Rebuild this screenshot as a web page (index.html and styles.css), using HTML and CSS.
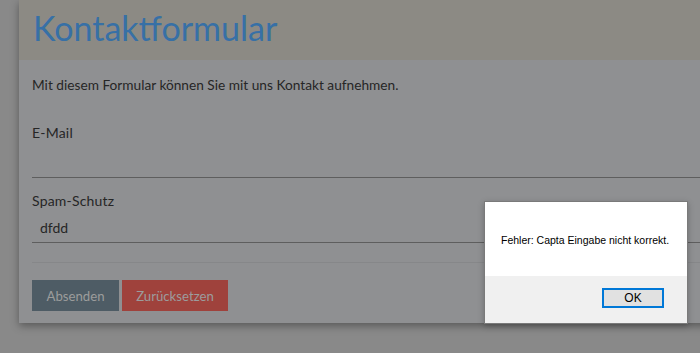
FILE: index.html
```html
<!DOCTYPE html>
<html lang="de">
<head>
<meta charset="utf-8">
<title>Kontaktformular</title>
<link rel="stylesheet" href="styles.css">
</head>
<body>
<div class="page">
  <div class="card">
    <header class="card-head">
      <h1 class="title">Kontaktformular</h1>
    </header>
    <form class="card-body">
      <p class="intro">Mit diesem Formular können Sie mit uns Kontakt aufnehmen.</p>
      <div class="field field-email">
        <label class="label">E-Mail</label>
        <div class="input"></div>
      </div>
      <div class="field field-spam">
        <label class="label">Spam-Schutz</label>
        <div class="input">dfdd</div>
      </div>
      <div class="divider"></div>
      <div class="actions">
        <button type="button" class="btn btn-send">Absenden</button>
        <button type="button" class="btn btn-reset">Zurücksetzen</button>
      </div>
    </form>
  </div>
</div>
<div class="dialog">
  <div class="dialog-msg">Fehler: Capta Eingabe nicht korrekt.</div>
  <div class="dialog-foot">
    <button type="button" class="dialog-ok">OK</button>
  </div>
</div>
</body>
</html>
```
FILE: styles.css
```css
html, body {
  margin: 0;
  padding: 0;
}
body {
  width: 700px;
  height: 353px;
  overflow: hidden;
  background: #898989;
  font-family: Lato, "Open Sans", sans-serif;
  position: relative;
}
.page {
  padding-left: 19px;
}
.card {
  width: 700px;
  background: #8f9092;
  box-shadow: 0 3px 8px rgba(0, 0, 0, 0.35);
}
.card-head {
  height: 60px;
  background: #8c8a84;
  display: flex;
  align-items: center;
}
.title {
  margin: 0 0 0 14px;
  font-weight: 400;
  font-size: 34px;
  color: #3770a6;
  position: relative;
  top: -3px;
}
.card-body {
  padding: 15px 0 12px 13px;
  display: flex;
  flex-direction: column;
}
.intro {
  margin: 0;
  font-size: 13.7px;
  line-height: 20px;
  color: #262626;
}
.field {
  display: flex;
  flex-direction: column;
}
.field-email {
  margin-top: 28px;
}
.field-spam {
  margin-top: 13px;
}
.label {
  font-size: 14px;
  line-height: 20px;
  color: #262626;
  letter-spacing: 0.2px;
}
.input {
  border-bottom: 1px solid #5e5e5e;
  font-size: 14px;
  line-height: 20px;
  color: #262626;
  padding-left: 8px;
}
.field-email .input {
  height: 34px;
}
.field-spam .input {
  height: 24px;
  padding-top: 7px;
}
.divider {
  margin-top: 19px;
  border-top: 1px solid #868789;
}
.actions {
  margin-top: 17px;
  display: flex;
  gap: 3px;
}
.btn {
  height: 31px;
  border: 0;
  font-family: Lato, "Open Sans", sans-serif;
  font-size: 13.2px;
  color: #9c9c9c;
  padding: 0;
  margin: 0;
}
.btn-send {
  background: #4e5c65;
  width: 87px;
}
.btn-reset {
  background: #9f423c;
  width: 106px;
}
.dialog {
  position: absolute;
  left: 484px;
  top: 201px;
  width: 202px;
  height: 121px;
  background: #ffffff;
  border: 1px solid #7a7a7a;
  box-shadow: 0 2px 6px rgba(0, 0, 0, 0.25);
  display: flex;
  flex-direction: column;
  font-family: "Liberation Sans", Arial, sans-serif;
}
.dialog-msg {
  height: 74px;
  display: flex;
  align-items: center;
  padding-left: 16px;
  padding-top: 2px;
  box-sizing: border-box;
  font-size: 10.5px;
  color: #000;
}
.dialog-foot {
  flex: 1;
  background: #f0f0f0;
  display: flex;
  justify-content: flex-end;
  align-items: flex-start;
  padding: 12px 23px 0 0;
}
.dialog-ok {
  width: 62px;
  height: 20px;
  background: #e1e1e1;
  border: 2px solid #0078d7;
  font-family: "Liberation Sans", Arial, sans-serif;
  font-size: 12px;
  color: #000;
  padding: 0;
  line-height: 14px;
}
```
